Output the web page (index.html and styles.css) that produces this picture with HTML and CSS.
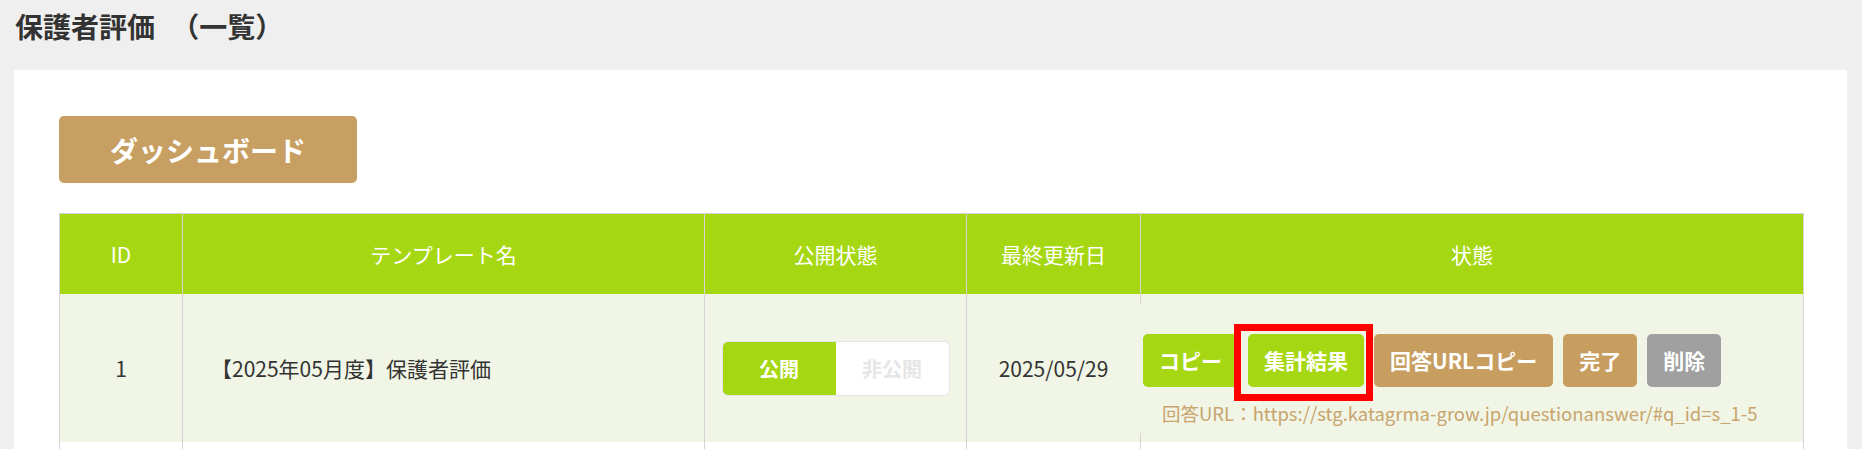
FILE: index.html
```html
<!DOCTYPE html>
<html lang="ja">
<head>
<meta charset="utf-8">
<title>保護者評価 （一覧）</title>
<link rel="stylesheet" href="styles.css">
</head>
<body>
<h1 class="page-title">保護者評価 （一覧）</h1>
<main class="panel">
  <a class="dash-btn" href="#">ダッシュボード</a>
  <table class="list">
    <colgroup>
      <col class="c-id"><col class="c-name"><col class="c-pub"><col class="c-date"><col class="c-state">
    </colgroup>
    <thead>
      <tr>
        <th>ID</th>
        <th>テンプレート名</th>
        <th>公開状態</th>
        <th>最終更新日</th>
        <th>状態</th>
      </tr>
    </thead>
    <tbody>
      <tr class="row-odd">
        <td class="center">1</td>
        <td class="name">【2025年05月度】保護者評価</td>
        <td class="center">
          <div class="toggle">
            <span class="tg on">公開</span>
            <span class="tg off">非公開</span>
          </div>
        </td>
        <td class="center">2025/05/29</td>
        <td class="state">
          <div class="state-inner">
            <div class="btns">
              <a class="btn green" href="#">コピー</a>
              <a class="btn green marked" href="#">集計結果</a>
              <a class="btn tan" href="#">回答URLコピー</a>
              <a class="btn tan" href="#">完了</a>
              <a class="btn gray" href="#">削除</a>
            </div>
            <p class="url">回答URL：https://stg.katagrma-grow.jp/questionanswer/#q_id=s_1-5</p>
          </div>
        </td>
      </tr>
      <tr class="row-even">
        <td></td><td></td><td></td><td></td><td></td>
      </tr>
    </tbody>
  </table>
</main>
</body>
</html>
```
FILE: styles.css
```css
html, body {
  margin: 0;
  padding: 0;
}
body {
  background: #efefef;
  font-family: "Noto Sans CJK JP", "Noto Sans", sans-serif;
  color: #333333;
}
.page-title {
  margin: 0 0 23px 0;
  padding: 5px 15px 0;
  font-size: 28px;
  line-height: 42px;
  font-weight: 700;
  word-spacing: 10px;
  color: #333333;
}
.panel {
  display: block;
  background: #ffffff;
  margin: 0 15px 0 14px;
  padding: 46px 44px 40px 45px;
}
.dash-btn {
  display: flex;
  align-items: center;
  justify-content: center;
  width: 298px;
  height: 67px;
  box-sizing: border-box;
  background: #c89f62;
  color: #ffffff;
  font-size: 28px;
  font-weight: 700;
  text-decoration: none;
  border-radius: 5px;
  margin-bottom: 30px;
}
.list {
  width: 1744px;
  border-collapse: collapse;
  table-layout: fixed;
  border: 1px solid #d4d4d4;
}
.c-id { width: 123px; }
.c-name { width: 522px; }
.c-pub { width: 262px; }
.c-date { width: 174px; }
.c-state { width: 663px; }
.list th {
  background: #a6d713;
  color: #ffffff;
  font-weight: 400;
  font-size: 21px;
  height: 80px;
  padding: 0;
  border-left: 1px solid #d4d4d4;
  border-right: 1px solid #d4d4d4;
  text-align: center;
  vertical-align: middle;
}
.list td {
  border-left: 1px solid #d4d4d4;
  border-right: 1px solid #d4d4d4;
  font-size: 21px;
  color: #333333;
  padding: 0;
  height: 148px;
  vertical-align: middle;
}
.row-odd td { background: #f0f5e6; }
.row-even td { background: #ffffff; }
.center { text-align: center; }
.list td.name {
  padding-left: 28px;
  text-align: left;
}
.toggle {
  display: inline-flex;
  width: 228px;
  height: 55px;
  box-sizing: border-box;
  border: 1px solid #e6e6e6;
  border-radius: 6px;
  background: #ffffff;
  overflow: hidden;
  vertical-align: middle;
}
.tg {
  flex: 1 1 0;
  display: flex;
  align-items: center;
  justify-content: center;
  font-size: 20px;
  font-weight: 700;
}
.tg.on {
  background: #a6d713;
  color: #ffffff;
}
.tg.off {
  color: #e6e6e6;
}
.list td.state {
  padding: 0;
  vertical-align: middle;
}
.state-inner {
  position: relative;
  margin-left: -2px;
  padding: 30px 0 6px 4px;
  background: #f0f5e6;
}
.btns {
  display: flex;
  gap: 10px;
}
.btn {
  position: relative;
  display: flex;
  align-items: center;
  height: 53px;
  padding: 0 16px;
  border-radius: 5px;
  color: #ffffff;
  font-size: 21px;
  font-weight: 700;
  text-decoration: none;
  white-space: nowrap;
}
.btn.green { background: #a6d713; }
.btn.tan { background: #c89d60; }
.btn.gray { background: #a0a0a0; }
.btn.marked::after {
  content: "";
  position: absolute;
  left: -14px;
  top: -10px;
  right: -9px;
  bottom: -14px;
  border: 7px solid #ff0000;
}
.url {
  margin: 13px 0 0 19px;
  font-size: 18.5px;
  line-height: 27px;
  color: #c9a46c;
}
```
